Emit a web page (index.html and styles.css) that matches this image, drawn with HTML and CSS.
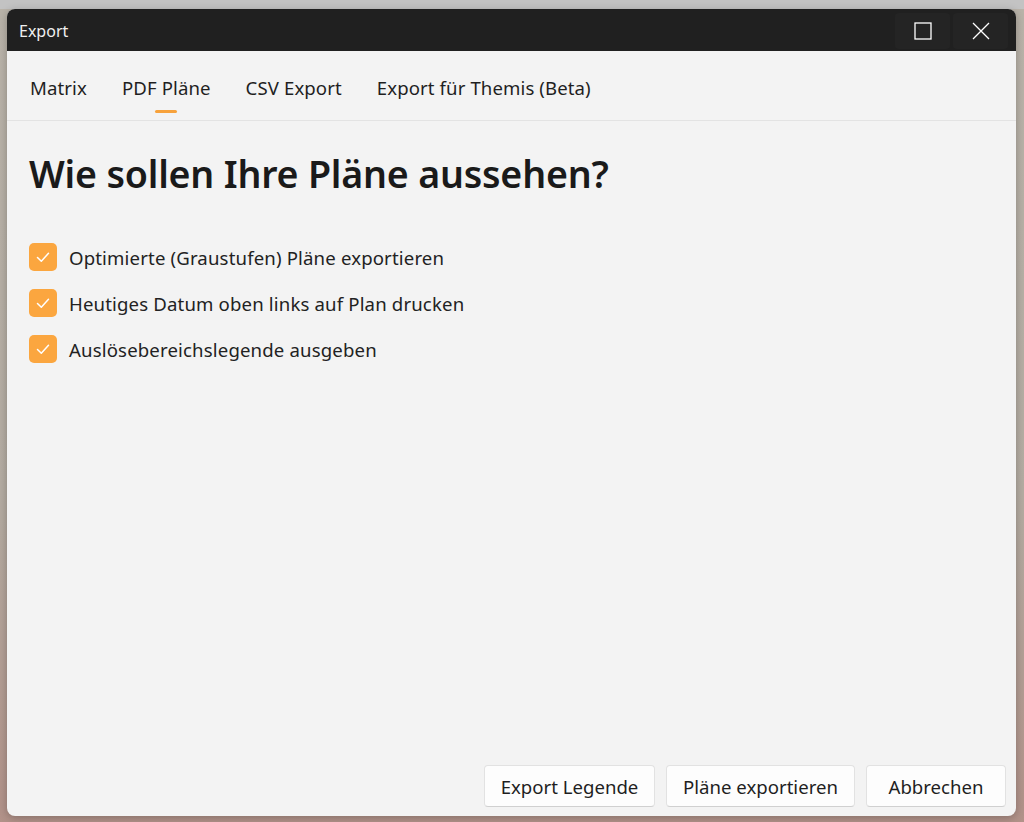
FILE: index.html
```html
<!DOCTYPE html>
<html lang="de">
<head>
  <meta charset="UTF-8">
  <meta name="viewport" content="width=device-width, initial-scale=1.0">
  <title>Export</title>
  <link rel="stylesheet" href="styles.css">
</head>
<body>
  <div class="export-window">
    <div class="title-bar">
      <span class="title">Export</span>
      <div class="window-controls">
        <button class="win-btn" aria-label="Maximieren">
          <svg width="18" height="18" viewBox="0 0 18 18"><rect x="1" y="1" width="16" height="16" fill="none" stroke="#fff" stroke-width="1.3"/></svg>
        </button>
        <button class="win-btn" aria-label="Schließen">
          <svg width="18" height="18" viewBox="0 0 18 18"><path d="M1 1 L17 17 M17 1 L1 17" stroke="#fff" stroke-width="1.3" fill="none"/></svg>
        </button>
      </div>
    </div>

    <nav class="tabs">
      <a class="tab">Matrix</a>
      <a class="tab active">PDF Pläne</a>
      <a class="tab">CSV Export</a>
      <a class="tab">Export für Themis (Beta)</a>
    </nav>

    <div class="content">
      <h1>Wie sollen Ihre Pläne aussehen?</h1>
      <ul class="options">
        <li class="option"><span class="check"><svg width="16" height="16" viewBox="0 0 16 16"><path d="M2.5 8.5 L6.3 12.2 L13.5 4.3" fill="none" stroke="#fff" stroke-width="1.5" stroke-linecap="round" stroke-linejoin="round"/></svg></span>Optimierte (Graustufen) Pläne exportieren</li>
        <li class="option"><span class="check"><svg width="16" height="16" viewBox="0 0 16 16"><path d="M2.5 8.5 L6.3 12.2 L13.5 4.3" fill="none" stroke="#fff" stroke-width="1.5" stroke-linecap="round" stroke-linejoin="round"/></svg></span>Heutiges Datum oben links auf Plan drucken</li>
        <li class="option"><span class="check"><svg width="16" height="16" viewBox="0 0 16 16"><path d="M2.5 8.5 L6.3 12.2 L13.5 4.3" fill="none" stroke="#fff" stroke-width="1.5" stroke-linecap="round" stroke-linejoin="round"/></svg></span>Auslösebereichslegende ausgeben</li>
      </ul>
    </div>

    <div class="footer">
      <button class="btn btn-legend">Export Legende</button>
      <button class="btn btn-export">Pläne exportieren</button>
      <button class="btn btn-cancel">Abbrechen</button>
    </div>
  </div>
</body>
</html>
```

FILE: styles.css
```css
html, body {
  margin: 0;
  height: 100%;
}
body {
  font-family: "Noto Sans", "Open Sans", sans-serif;
  background: linear-gradient(to bottom, #c3c3c3 0, #c3c3c3 9px, #b9b3a9 9px, #b4aca2 60%, #b29289 100%);
  padding: 9px 8px 6px 7px;
  box-sizing: border-box;
}
.export-window {
  height: 807px;
  background: #f3f3f3;
  border-radius: 8px;
  overflow: hidden;
  display: flex;
  flex-direction: column;
  box-shadow: 0 2px 8px rgba(0, 0, 0, 0.25);
}
.title-bar {
  height: 42px;
  background: #202020;
  display: flex;
  align-items: center;
  justify-content: space-between;
  padding-left: 12px;
}
.title {
  color: #f0f0f0;
  font-size: 16px;
  padding-top: 2px;
}
.window-controls {
  display: flex;
  gap: 3px;
  padding-right: 8px;
  align-self: flex-end;
  height: 37px;
  margin-bottom: 1px;
}
.win-btn {
  width: 55px;
  height: 36px;
  background: #242424;
  border: none;
  border-radius: 4px;
  display: flex;
  align-items: center;
  justify-content: center;
  padding: 0;
}
.tabs {
  height: 69px;
  border-bottom: 1px solid #e3e3e3;
  display: flex;
  gap: 35px;
  padding-left: 23px;
}
.tab {
  position: relative;
  font-size: 18.6px;
  letter-spacing: 0.1px;
  color: #1f1f1f;
  line-height: 74px;
  height: 69px;
}
.tab.active::after {
  content: "";
  position: absolute;
  left: 50%;
  bottom: 7px;
  width: 22px;
  height: 3px;
  margin-left: -11px;
  border-radius: 2px;
  background: #f7a23c;
}
.content {
  padding: 0 22px;
  flex: 1;
}
h1 {
  font-size: 37.6px;
  font-weight: 600;
  color: #1a1a1a;
  margin: 27px 0 44px;
  letter-spacing: -0.2px;
}
.options {
  list-style: none;
  padding: 0;
  margin: 0;
  display: flex;
  flex-direction: column;
  gap: 18px;
}
.option {
  display: flex;
  align-items: center;
  gap: 12px;
  font-size: 18.6px;
  letter-spacing: 0.15px;
  color: #222;
  height: 28px;
}
.check {
  width: 28px;
  height: 28px;
  border-radius: 5px;
  background: #fba63f;
  display: flex;
  align-items: center;
  justify-content: center;
}
.footer {
  display: flex;
  justify-content: flex-end;
  gap: 11px;
  padding: 0 10px 9px 0;
}
.btn {
  font-family: inherit;
  font-size: 18.6px;
  color: #1f1f1f;
  background: #fdfdfd;
  border: 1px solid #e2e2e2;
  border-bottom-color: #d0d0d0;
  border-radius: 4px;
  height: 42px;
  padding: 0 12px;
}
.btn-legend { width: 171px; }
.btn-export { width: 189px; }
.btn-cancel { width: 140px; }
```
